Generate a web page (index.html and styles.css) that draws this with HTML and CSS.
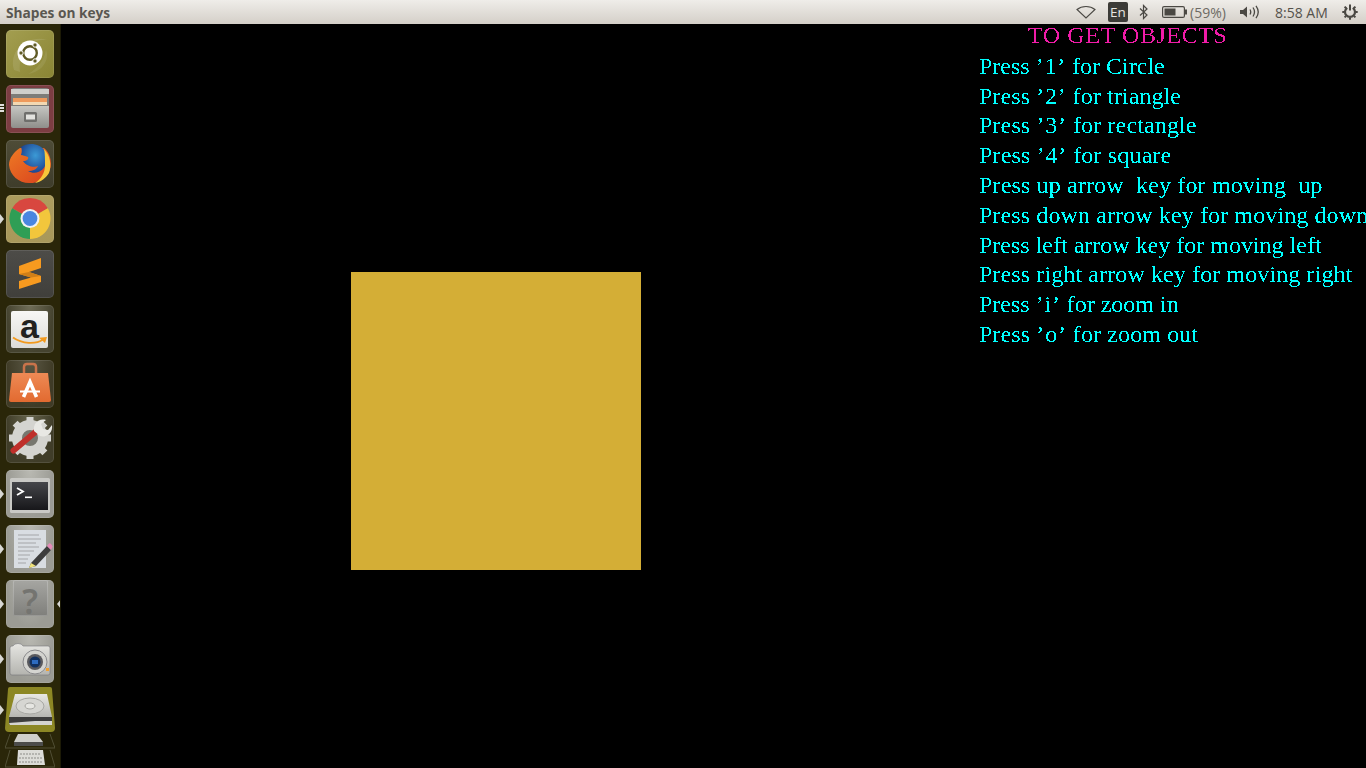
FILE: index.html
```html
<!DOCTYPE html>
<html lang="en">
<head>
<meta charset="utf-8">
<title>Shapes on keys</title>
<link rel="stylesheet" href="styles.css">
</head>
<body>
<svg class="defs" width="0" height="0" aria-hidden="true">
  <defs>
    <linearGradient id="metal" x1="0" y1="0" x2="0" y2="1"><stop offset="0" stop-color="#e6e6e2"/><stop offset="1" stop-color="#b4b4af"/></linearGradient>
    <linearGradient id="drawer" x1="0" y1="0" x2="0" y2="1"><stop offset="0" stop-color="#c6c6c2"/><stop offset="1" stop-color="#8f8f8b"/></linearGradient>
    <linearGradient id="orange" x1="0" y1="0" x2="0" y2="1"><stop offset="0" stop-color="#ee8a55"/><stop offset="1" stop-color="#e26a30"/></linearGradient>
    <linearGradient id="fox" x1="0" y1="0" x2="1" y2="1"><stop offset="0" stop-color="#ee7a24"/><stop offset="1" stop-color="#d8401e"/></linearGradient>
    <radialGradient id="globe" cx="0.55" cy="0.4" r="0.65"><stop offset="0" stop-color="#3b9ad6"/><stop offset="1" stop-color="#1b3f8c"/></radialGradient>
    <linearGradient id="term" x1="0" y1="0" x2="0" y2="1"><stop offset="0" stop-color="#45464a"/><stop offset="1" stop-color="#17171a"/></linearGradient>
    <linearGradient id="disk" x1="0" y1="0" x2="0" y2="1"><stop offset="0" stop-color="#e8e8e4"/><stop offset="1" stop-color="#b6b6b2"/></linearGradient>
    <filter id="alias" x="0" y="0" width="100%" height="100%" color-interpolation-filters="sRGB">
      <feComponentTransfer><feFuncA type="discrete" tableValues="0 1"/></feComponentTransfer>
    </filter>
  </defs>
</svg>

<header class="topbar">
  <span class="window-title">Shapes on keys</span>
  <div class="indicators">
    <svg class="ind ind-wifi" width="20" height="14" viewBox="0 0 20 14"><path d="M1 4.500C6 .5 14 .5 19 4.500L10 13Z" fill="none" stroke="#4a4843" stroke-width="1.100"/></svg>
    <span class="ind ind-lang">En</span>
    <svg class="ind ind-bt" width="9" height="16" viewBox="0 0 9 16"><path d="M1 4.500L8 11 4.500 14.500V1.500L8 5 1 11.500" fill="none" stroke="#4a4843" stroke-width="1.200"/></svg>
    <svg class="ind ind-batt" width="25" height="12" viewBox="0 0 25 12"><rect x=".6" y=".6" width="21.800" height="10.800" rx="1.500" fill="none" stroke="#4a4843" stroke-width="1.200"/><rect x="2.500" y="2.500" width="11" height="7" fill="#4a4843"/><rect x="23" y="3.500" width="2" height="5" fill="#4a4843"/></svg>
    <span class="ind ind-text ind-pct">(59%)</span>
    <svg class="ind ind-vol" width="20" height="14" viewBox="0 0 20 14"><path d="M0 5H3L7 1.500V12.500L3 9H0Z" fill="#4a4843"/><path d="M10 4.500Q11.500 7 10 9.500M13 2.500Q16 7 13 11.500M16 .8Q20.500 7 16 13.200" fill="none" stroke="#4a4843" stroke-width="1.300"/></svg>
    <span class="ind ind-text ind-time">8:58 AM</span>
    <svg class="ind ind-gear" width="16" height="16" viewBox="0 0 16 16"><g fill="none" stroke="#4a4843"><path stroke-width="2.200" d="M5.200 3.800A5 5 0 1 0 10.800 3.800"/><path stroke-width="2" d="M8 .5V6.500"/><path stroke-width="2" d="M2.600 2.600L4 4M13.400 2.600L12 4M.3 8H2.500M13.500 8H15.700M2.600 13.400L4 12M13.400 13.400L12 12M8 13.500V15.700"/></g></svg>
  </div>
</header>

<div class="desktop">
  <nav class="launcher">
    <div class="slot">
      <div class="tile t-ubuntu">
        <svg width="48" height="48" viewBox="0 0 48 48">
          <path d="M8 40C2 20 22 4 42 10C26 8 12 20 14 42Z" fill="#fff" opacity=".1"/>
          <path d="M40 20C44 30 36 42 22 44C32 38 38 30 40 20Z" fill="#fff" opacity=".08"/>
          <circle cx="24" cy="23" r="12.500" fill="#fff"/>
          <circle cx="24" cy="23" r="6.800" fill="none" stroke="#5f5a25" stroke-width="2.400"/>
          <circle cx="24" cy="23" r="4.800" fill="#fff"/>
          <g fill="#5f5a25" stroke="#fff" stroke-width="1"><circle cx="29" cy="15" r="2.200"/><circle cx="15" cy="23" r="2.200"/><circle cx="29" cy="31" r="2.200"/></g>
        </svg>
      </div>
    </div>
    <div class="slot">
      <span class="dashes"><i></i><i></i><i></i></span>
      <div class="tile t-files">
        <svg width="48" height="48" viewBox="0 0 48 48">
          <path d="M5 6Q5 3 8 3H40Q43 3 43 6V22H5Z" fill="#7d7d79"/>
          <rect x="5" y="4" width="38" height="5" fill="#cfcfcb"/>
          <rect x="7" y="13" width="34" height="4" fill="#ee9a5c"/>
          <rect x="7" y="17" width="34" height="3" fill="#f2d8b2"/>
          <path d="M5 21H43V41Q43 43 41 43H7Q5 43 5 41Z" fill="url(#drawer)"/>
          <rect x="18" y="27" width="13" height="10" rx="1.500" fill="#6f6f6c"/>
          <rect x="20" y="29.500" width="9" height="5" fill="#e2e2de"/>
        </svg>
      </div>
    </div>
    <div class="slot">
      <div class="tile t-firefox">
        <svg width="48" height="48" viewBox="0 0 48 48">
          <path d="M14 8C8 12 3 18 3 25C4 36 14 44 25 43C36 43 45 33 45 24C45 17 42 11 38 8Z" fill="url(#fox)"/>
          <path d="M15 7C22 2 34 3 39 11C43 18 41 25 37 29C33 33 27 34 22 31C27 31 31 29 32 26C28 28 20 26 17 21C21 21 23 19 22 17C19 16 17 15 15 15C16 12 16 9 15 7Z" fill="url(#globe)"/>
          <path d="M38 9C44 15 46 25 43 33C40 38 35 42 29 43C35 39 39 33 39 25C39 19 39 13 38 9Z" fill="#f6c53a"/>
        </svg>
      </div>
    </div>
    <div class="slot">
      <span class="pip"></span>
      <div class="tile t-chrome">
        <svg width="48" height="48" viewBox="0 0 48 48">
          <path d="M24 23.500L6.200 13.300A20.500 20.500 0 0 1 41.800 13.300Z" fill="#d8473f"/>
          <path d="M24 23.500L41.800 13.300A20.500 20.500 0 0 1 24 44Z" fill="#f2c63c"/>
          <path d="M24 23.500L24 44A20.500 20.500 0 0 1 6.200 13.300Z" fill="#2f9e55"/>
          <circle cx="24" cy="23.500" r="9.500" fill="#f2f2f2"/>
          <circle cx="24" cy="23.500" r="7.400" fill="#4a86e0"/>
        </svg>
      </div>
    </div>
    <div class="slot">
      <div class="tile t-sublime">
        <svg width="48" height="48" viewBox="0 0 48 48">
          <path d="M13 16L35 8V18L23 22L35 26V32L13 39V31L25 27.500L13 24Z" fill="#f79a1f"/>
          <path d="M23 22L35 26L25 27.500L13 24Z" fill="#d07f18"/>
        </svg>
      </div>
    </div>
    <div class="slot">
      <div class="tile t-amazon">
        <div class="amazon-card">
          <span class="amazon-a">a</span>
          <svg class="amazon-smile" width="36" height="10" viewBox="0 0 36 10"><path d="M1 1.500C10 8 24 8.500 31 3.500" fill="none" stroke="#f29a1e" stroke-width="1.800"/><path d="M27 1.800L35 1 33 7Z" fill="#f29a1e"/></svg>
        </div>
      </div>
    </div>
    <div class="slot">
      <div class="tile t-software">
        <svg width="48" height="48" viewBox="0 0 48 48">
          <path d="M18 14V7Q18 4 21 4H27Q30 4 30 7V14" fill="none" stroke="#c9734a" stroke-width="2.500"/>
          <path d="M6 13H42L45 40Q45 42 43 42H5Q3 42 3 40Z" fill="url(#orange)"/>
          <path d="M17.500 37L24 22L30.500 37" fill="none" stroke="#fff" stroke-width="3.600"/>
          <path d="M14 31.500H34" stroke="#fff" stroke-width="2"/>
        </svg>
      </div>
    </div>
    <div class="slot">
      <div class="tile t-settings">
        <svg width="48" height="48" viewBox="0 0 48 48">
          <circle cx="24" cy="23" r="13" fill="#77776f" stroke="#d4d4d0" stroke-width="10"/>
          <g stroke="#d4d4d0" stroke-width="7"><path d="M24 2V8M24 38V44M3 23H9M39 23H45M9.100 8.100L13.400 12.400M34.600 33.600L38.900 37.900M9.100 37.900L13.400 33.600M34.600 12.400L38.900 8.100"/></g>
          <path d="M7.500 35.500L33 14" stroke="#bf2f2a" stroke-width="6" stroke-linecap="round"/>
          <path d="M28 16C27 9 32 3 40 5L35 9 37 14 42 15 46 10C47 18 41 23 34 21Z" fill="#e8e8e4"/>
        </svg>
      </div>
    </div>
    <div class="slot">
      <span class="pip"></span>
      <div class="tile t-grey">
        <svg width="48" height="48" viewBox="0 0 48 48">
          <rect x="4" y="8" width="40" height="35" rx="1.500" fill="#c9c9c5"/>
          <rect x="6" y="12" width="36" height="28" fill="url(#term)"/>
          <path d="M11 18L17 21.500 11 25" fill="none" stroke="#fff" stroke-width="1.800"/>
          <rect x="19" y="26.500" width="7" height="1.600" fill="#fff"/>
        </svg>
      </div>
    </div>
    <div class="slot">
      <span class="pip"></span>
      <div class="tile t-grey">
        <svg width="48" height="48" viewBox="0 0 48 48">
          <rect x="8" y="5" width="32" height="38" fill="#d9dde2"/>
          <g stroke="#a4a5a8" stroke-width="1"><path d="M12 10H33M12 14H35M12 18H30M12 22H33M12 26H28M12 30H24M12 34H22M12 38H20"/></g>
          <path d="M25 38L41 21 45 25 30 41 23 43Z" fill="#3d3d3d"/>
          <path d="M41 21L43 18.500Q44 18 45 19L46.500 21Q47 22 46 23L45 25Z" fill="#e58ab8"/>
          <path d="M25 38L30 41 23 43Z" fill="#f0e27a"/>
        </svg>
      </div>
    </div>
    <div class="slot">
      <span class="pip"></span>
      <span class="pip-right"></span>
      <div class="tile t-grey t-open">
        <div class="help-face"><span class="help-mark">?</span></div>
      </div>
    </div>
    <div class="slot">
      <span class="pip"></span>
      <div class="tile t-grey">
        <svg width="48" height="48" viewBox="0 0 48 48">
          <path d="M4 13Q4 11 6 11H7Q8 8.500 12 8.500Q16 8.500 17 11H42Q44 11 44 13V38Q44 40 42 40H6Q4 40 4 38Z" fill="url(#metal)" stroke="#77777a" stroke-width=".6"/>
          <circle cx="29" cy="27" r="12" fill="#d4d4d0" stroke="#8a8a8c"/>
          <circle cx="29" cy="27" r="8" fill="#5a5a5e"/>
          <circle cx="29" cy="27" r="5.500" fill="#12305e"/>
          <rect x="26" y="25" width="6" height="4" fill="#2d6bc0"/>
          <rect x="40" y="33" width="3" height="3" fill="#f0a030"/>
        </svg>
      </div>
    </div>
    <div class="slot slot-fold">
      <span class="pip"></span>
      <svg class="disk-tile" width="50" height="45" viewBox="0 0 50 45">
        <path d="M5 0H45Q47 0 47 2L50 41Q50 45 46 45H4Q0 45 0 41L3 2Q3 0 5 0Z" fill="#8c8724"/>
        <path d="M10 7H42L47 30H4Z" fill="url(#disk)"/>
        <ellipse cx="25" cy="19" rx="14" ry="8" fill="#d6d6d2" stroke="#a8a8a4"/>
        <ellipse cx="25" cy="19" rx="5" ry="3" fill="#e6e6e2" stroke="#a8a8a4"/>
        <path d="M4 30H47V36L46 38H5L4 36Z" fill="#3d3d3d"/>
        <path d="M30 34H47V38H5L4 36Z" fill="#d4d4d0"/>
      </svg>
    </div>
    <div class="fold">
      <svg width="50" height="18" viewBox="0 0 50 18">
        <path d="M0 16L5 2M50 16L45 2M0 16H50" fill="none" stroke="#5b5940" stroke-width=".8"/>
        <path d="M13 2H32L38 10H9Z" fill="#cfcfcb"/>
        <path d="M9 10H38V14H9Z" fill="#4c4c4a"/>
      </svg>
    </div>
    <div class="fold">
      <svg width="50" height="18" viewBox="0 0 50 18">
        <path d="M0 17L5 0M50 17L45 0M0 17H50" fill="none" stroke="#5b5940" stroke-width=".8"/>
        <path d="M13 0H38L40 15H12Z" fill="#dcdcd8"/>
        <path d="M15 4H35M14 8H38M14 12H37" stroke="#8c8c88" stroke-width="1" stroke-dasharray="2 1"/>
      </svg>
    </div>
  </nav>

  <main class="canvas">
    <div class="shape-square"></div>
    <section class="help">
      <h1 class="help-title">TO GET OBJECTS</h1>
      <p>Press <span class="key">’1’</span> for Circle</p>
      <p class="ls-09">Press <span class="key">’2’</span> for triangle</p>
      <p class="ls-13">Press <span class="key">’3’</span> for rectangle</p>
      <p class="ls-16">Press <span class="key">’4’</span> for square</p>
      <p class="ls-15">Press up arrow  key for moving  up</p>
      <p class="ls-11">Press down arrow key for moving down</p>
      <p>Press left arrow key for moving left</p>
      <p class="ls-11">Press right arrow key for moving right</p>
      <p>Press <span class="key">’i’</span> for zoom in</p>
      <p class="ls-11">Press <span class="key">’o’</span> for zoom out</p>
    </section>
  </main>
</div>
</body>
</html>
```

FILE: styles.css
```css
* { box-sizing: border-box; margin: 0; padding: 0; }
html, body { width: 1366px; height: 768px; overflow: hidden; background: #000; }
body { display: flex; flex-direction: column; font-family: "Noto Sans", "Open Sans", sans-serif; }
.defs { position: absolute; }

.topbar {
  height: 24px; flex: none; display: flex; align-items: center; justify-content: space-between;
  background: linear-gradient(#efede9, #d4cfc8); padding: 0 8px 0 6px;
}
.window-title { font: 700 13.700px "Open Sans", "Noto Sans", sans-serif; color: #5a5751; }
.indicators { display: flex; align-items: center; }
.ind { flex: none; display: block; }
.ind-text { font: 400 14px "Open Sans", "Noto Sans", sans-serif; color: #55524c; white-space: nowrap; }
.ind-lang {
  width: 20px; height: 20px; margin-left: 12px; border-radius: 2px; background: #3c3b37; color: #e8e6e1;
  font: 400 13.500px/20px "Open Sans", sans-serif; text-align: center;
}
.ind-bt { margin-left: 11px; }
.ind-batt { margin-left: 14px; }
.ind-pct { margin-left: 3px; width: 38px; color: #6d6a64; }
.ind-vol { margin-left: 12px; }
.ind-time { margin-left: 15px; width: 55px; }
.ind-gear { margin-left: 12px; }

.desktop { flex: 1; display: flex; min-height: 0; }
.launcher { width: 61px; flex: none; background: #2a2609; border-right: 1px solid #1c1a06; padding-top: 6px; overflow: hidden; }
.slot { position: relative; height: 48px; margin: 0 0 7px 6px; width: 48px; }
.slot-fold { height: 45px; margin: -3px 0 0 5px; width: 50px; }
.disk-tile { display: block; }
.slot-fold .pip { left: -5px; top: 18px; }
.tile {
  width: 48px; height: 48px; border-radius: 5px; overflow: hidden;
  box-shadow: inset 0 0 0 1px rgba(255,255,255,.1);
}
.tile svg { display: block; }
.t-ubuntu { background: linear-gradient(135deg, #a39e50, #8a8534); }
.t-files { background: #7c3d42; }
.t-firefox { background: linear-gradient(#4e4c37, #3e3c2a); }
.t-chrome { background: linear-gradient(#ad9d5e, #a8985a); }
.t-sublime { background: linear-gradient(#4d4c48, #403f3b); }
.t-amazon { background: radial-gradient(ellipse at 50% 0, #6f6d58, #45432f 70%); padding: 6px 5px; overflow: visible; }
.t-software { background: radial-gradient(ellipse at 50% 0, #5a5744, #3f3b26 70%); }
.t-settings { background: radial-gradient(ellipse at 50% 0, #66644c, #403d29 70%); }
.t-grey { background: radial-gradient(ellipse at 50% 0, #b9b9b2, #9b9b94 70%); }
.t-open { overflow: visible; }

.amazon-card { position: relative; width: 37px; height: 37px; border-radius: 2px; background: linear-gradient(#f7f7f5, #dcdcd8); }
.amazon-a { display: block; text-align: center; font: 700 34px/30px "Liberation Sans", sans-serif; color: #22221f; }
.amazon-smile { position: absolute; left: 1px; bottom: 2px; }

.help-face { margin: 6px auto; width: 35px; height: 36px; border-radius: 2px; background: linear-gradient(#a6a6a2, #7f7f7b); box-shadow: inset 0 0 0 1px rgba(255,255,255,.2); text-align: center; }
.help-mark { display: block; height: 36px; font: 600 34px/42px "Noto Sans", sans-serif; color: #747470; }

.pip { position: absolute; left: -6px; top: 19px; border-style: solid; border-width: 5px 0 5px 4px; border-color: transparent transparent transparent #d8d8d4; }
.pip-right { position: absolute; right: -7px; top: 19px; border-style: solid; border-width: 5px 4px 5px 0; border-color: transparent #d8d8d4 transparent transparent; }
.dashes { position: absolute; left: -6px; top: 19px; display: flex; flex-direction: column; gap: 1px; }
.dashes i { display: block; width: 4px; height: 2px; background: #e0e0dc; }

.fold { margin-left: 5px; width: 50px; }
.fold svg { display: block; }

.canvas { flex: 1; display: flex; align-items: flex-start; padding-left: 290px; min-width: 0; overflow: hidden; background: #000; }
.shape-square { flex: none; width: 290px; height: 298px; margin-top: 248px; background: #d4ae36; }
.help {
  flex: none; margin-left: 338px; filter: url(#alias);
  font: 400 24px/29.800px "Liberation Serif", serif; color: #00ffff;
}
.help p { white-space: pre; }
.help-title { margin: 0 0 5.800px 49px; font: inherit; line-height: 22px; letter-spacing: .6px; color: #f01ca8; }
.key { letter-spacing: .8px; }
.ls-09 { letter-spacing: .09px; }
.ls-11 { letter-spacing: .11px; }
.ls-13 { letter-spacing: .13px; }
.ls-15 { letter-spacing: .15px; }
.ls-16 { letter-spacing: .16px; }
```
